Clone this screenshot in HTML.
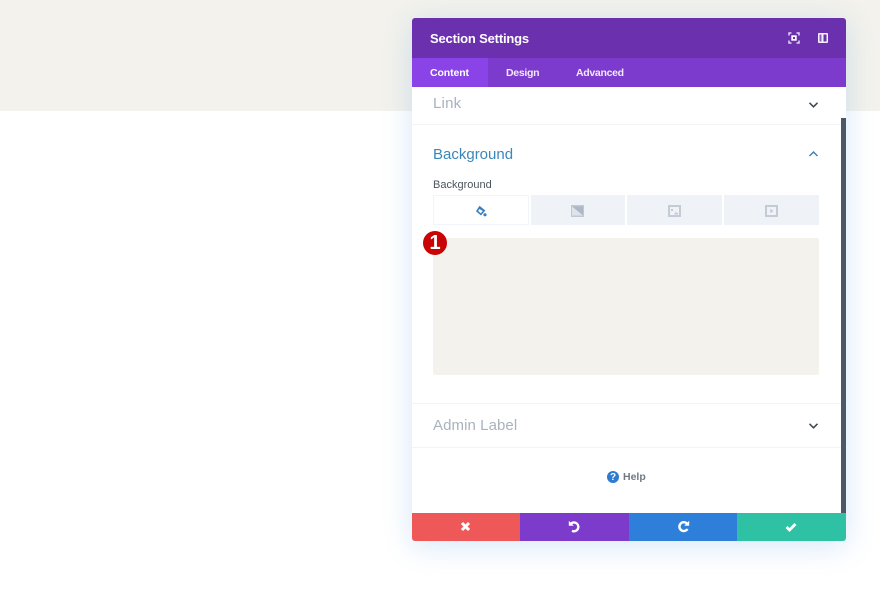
<!DOCTYPE html>
<html>
<head>
<meta charset="utf-8">
<style>
html,body{margin:0;padding:0;background:#fff;}
body{width:880px;height:604px;position:relative;overflow:hidden;font-family:"Liberation Sans",sans-serif;}
.a{position:absolute;}
.t{position:absolute;white-space:nowrap;line-height:1;}
svg{position:absolute;display:block;}
</style>
</head>
<body>
<div class="a" style="left:0;top:0;width:880px;height:111px;background:#f3f2ec;"></div>

<div class="a" style="left:412px;top:18px;width:434px;height:523px;background:#fff;border-radius:3px;box-shadow:0 5px 30px rgba(43,135,218,.2);"></div>

<!-- header -->
<div class="a" style="left:412px;top:18px;width:434px;height:40px;background:#6b30ae;border-radius:3px 3px 0 0;"></div>
<div class="t" style="left:430px;top:32px;font-size:13px;font-weight:bold;color:#fff;letter-spacing:-.18px;">Section Settings</div>
<svg style="left:788px;top:32px" width="12" height="12" viewBox="0 0 12 12" fill="none" stroke="#e3d2f5" stroke-width="1.500"><path d="M1 3.500V1H3.500M8.500 1H11V3.500M11 8.500V11H8.500M3.500 11H1V8.500"/><rect x="3.300" y="3.300" width="5.400" height="5.400" fill="#fff" stroke="none"/><rect x="5" y="5" width="2" height="2" fill="#6b30ae" stroke="none"/></svg>
<svg style="left:818px;top:33px" width="10" height="10" viewBox="0 0 10 10"><rect width="10" height="10" rx="1" fill="#f6f0fc"/><rect x="1.500" y="1.500" width="2" height="7" fill="#8a5cc0"/><rect x="5.500" y="1.500" width="3" height="7" fill="#6b30ae"/></svg>

<!-- tabs -->
<div class="a" style="left:412px;top:58px;width:434px;height:29px;background:#7d3bcd;"></div>
<div class="a" style="left:412px;top:58px;width:76px;height:29px;background:#8a43e6;"></div>
<div class="t" style="left:430px;top:67.500px;font-size:10.500px;font-weight:bold;color:#fff;line-height:11px;letter-spacing:-.1px;">Content</div>
<div class="t" style="left:506px;top:67.500px;font-size:10.500px;font-weight:bold;color:#f2e9fb;line-height:11px;letter-spacing:-.3px;">Design</div>
<div class="t" style="left:576px;top:67.500px;font-size:10.500px;font-weight:bold;color:#f2e9fb;line-height:11px;letter-spacing:-.3px;">Advanced</div>

<!-- link -->
<div class="t" style="left:433px;top:96px;font-size:15px;color:#a9b2bd;line-height:15px;letter-spacing:.2px;">Link</div>
<svg style="left:808px;top:101px" width="11" height="8" viewBox="0 0 11 8" fill="none" stroke="#3c4653" stroke-width="1.500"><path d="M1.500 1.800L5.500 5.800L9.500 1.800"/></svg>
<div class="a" style="left:412px;top:124px;width:429px;height:1px;background:#f2f4f6;"></div>

<!-- background -->
<div class="t" style="left:433px;top:147px;font-size:15px;color:#3b87b9;line-height:15px;">Background</div>
<svg style="left:808px;top:150px" width="11" height="8" viewBox="0 0 11 8" fill="none" stroke="#3b87b9" stroke-width="1.500"><path d="M1.500 6L5.500 2L9.500 6"/></svg>
<div class="t" style="left:433px;top:179.500px;font-size:11px;color:#4b545e;line-height:11px;">Background</div>

<!-- bg tabs -->
<div class="a" style="left:433px;top:195px;width:96px;height:30px;background:#fff;box-sizing:border-box;border:1px solid #f1f4f8;"></div>
<div class="a" style="left:531px;top:195px;width:94px;height:30px;background:#eff3f8;"></div>
<div class="a" style="left:627px;top:195px;width:95px;height:30px;background:#eff3f8;"></div>
<div class="a" style="left:724px;top:195px;width:95px;height:30px;background:#eff3f8;"></div>

<svg style="left:475px;top:205px" width="12" height="12" viewBox="0 0 12 12"><path d="M4.500 .8L10.300 5.500L6 10.500L1 6.200Z" fill="#3a7fbf"/><path d="M4.300 4L7.800 6L5.800 8.300L3.200 6Z" fill="#fff"/><circle cx="10" cy="9.800" r="1.600" fill="#3a7fbf"/></svg>
<svg style="left:571px;top:205px" width="13" height="12" viewBox="0 0 13 12"><rect width="13" height="12" fill="#bfc8d5"/><path d="M1 1.500H12V10.500Z" fill="#adb8c6"/><path d="M1 1.500V10.500H12Z" fill="#dfe4eb"/></svg>
<svg style="left:668px;top:205px" width="13" height="12" viewBox="0 0 13 12" fill="none"><rect x="1" y="1" width="11" height="10" stroke="#c3cbd7" stroke-width="2"/><path d="M3 4h2v2H3zM6.500 8h1V6.500h1V8h1.500v1.500h-3.500z" fill="#c3cbd7"/></svg>
<svg style="left:765px;top:205px" width="13" height="12" viewBox="0 0 13 12" fill="none"><rect x="1" y="1" width="11" height="10" stroke="#c3cbd7" stroke-width="2"/><path d="M5.300 3.800L8.500 6L5.300 8.200Z" fill="#c3cbd7"/></svg>

<!-- colour preview -->
<div class="a" style="left:433px;top:238px;width:386px;height:137px;background:#f3f2ec;border-radius:2px;"></div>
<div class="a" style="left:423px;top:231px;width:24px;height:24px;border-radius:50%;background:#c80404;"></div>
<div class="t" style="left:423px;top:233px;width:24px;text-align:center;font-size:20px;font-weight:bold;color:#fff;">1</div>

<!-- admin label -->
<div class="a" style="left:412px;top:403px;width:429px;height:1px;background:#f2f4f6;"></div>
<div class="t" style="left:433px;top:418px;font-size:15px;color:#a9b2bd;line-height:15px;letter-spacing:.08px;">Admin Label</div>
<svg style="left:808px;top:422px" width="11" height="8" viewBox="0 0 11 8" fill="none" stroke="#3c4653" stroke-width="1.500"><path d="M1.500 1.800L5.500 5.800L9.500 1.800"/></svg>
<div class="a" style="left:412px;top:447px;width:429px;height:1px;background:#f2f4f6;"></div>

<!-- help -->
<div class="a" style="left:607px;top:471px;width:12px;height:12px;border-radius:50%;background:#2e7bd0;"></div>
<div class="t" style="left:607px;top:472.500px;width:12px;text-align:center;font-size:10px;font-weight:bold;color:#fff;">?</div>
<div class="t" style="left:623px;top:472px;font-size:10.500px;font-weight:bold;color:#707882;line-height:11px;">Help</div>

<!-- scrollbar -->
<div class="a" style="left:841px;top:118px;width:5px;height:395px;background:#4c5866;"></div>

<!-- footer -->
<div class="a" style="left:412px;top:513px;width:108px;height:28px;background:#ef5858;border-radius:0 0 0 3px;"></div>
<div class="a" style="left:520px;top:513px;width:109px;height:28px;background:#7d3bcb;"></div>
<div class="a" style="left:629px;top:513px;width:108px;height:28px;background:#2e7fd9;"></div>
<div class="a" style="left:737px;top:513px;width:109px;height:28px;background:#2fc1a4;border-radius:0 0 3px 0;"></div>

<svg style="left:460px;top:521px" width="11" height="11" viewBox="0 0 11 11" fill="none" stroke="#fff" stroke-width="3"><path d="M2 2L9 9M9 2L2 9"/></svg>
<svg style="left:568px;top:520px" width="13" height="13" viewBox="0 0 13 13" fill="none" stroke="#fff" stroke-width="2.400"><path d="M3 3.600A4.400 4.400 0 1 1 4 10.800"/><path d="M.8 .8V5.800H5.800Z" fill="#fff" stroke="none"/></svg>
<svg style="left:677px;top:520px" width="13" height="13" viewBox="0 0 13 13" fill="none" stroke="#fff" stroke-width="2.400"><path d="M10 3.600A4.400 4.400 0 1 0 10.500 9"/><path d="M12.200 .8V5.800H7.200Z" fill="#fff" stroke="none"/></svg>
<svg style="left:785px;top:522px" width="12" height="10" viewBox="0 0 12 10" fill="none" stroke="#fff" stroke-width="2.800"><path d="M1.500 5L4.500 8L10.500 2"/></svg>
</body>
</html>
